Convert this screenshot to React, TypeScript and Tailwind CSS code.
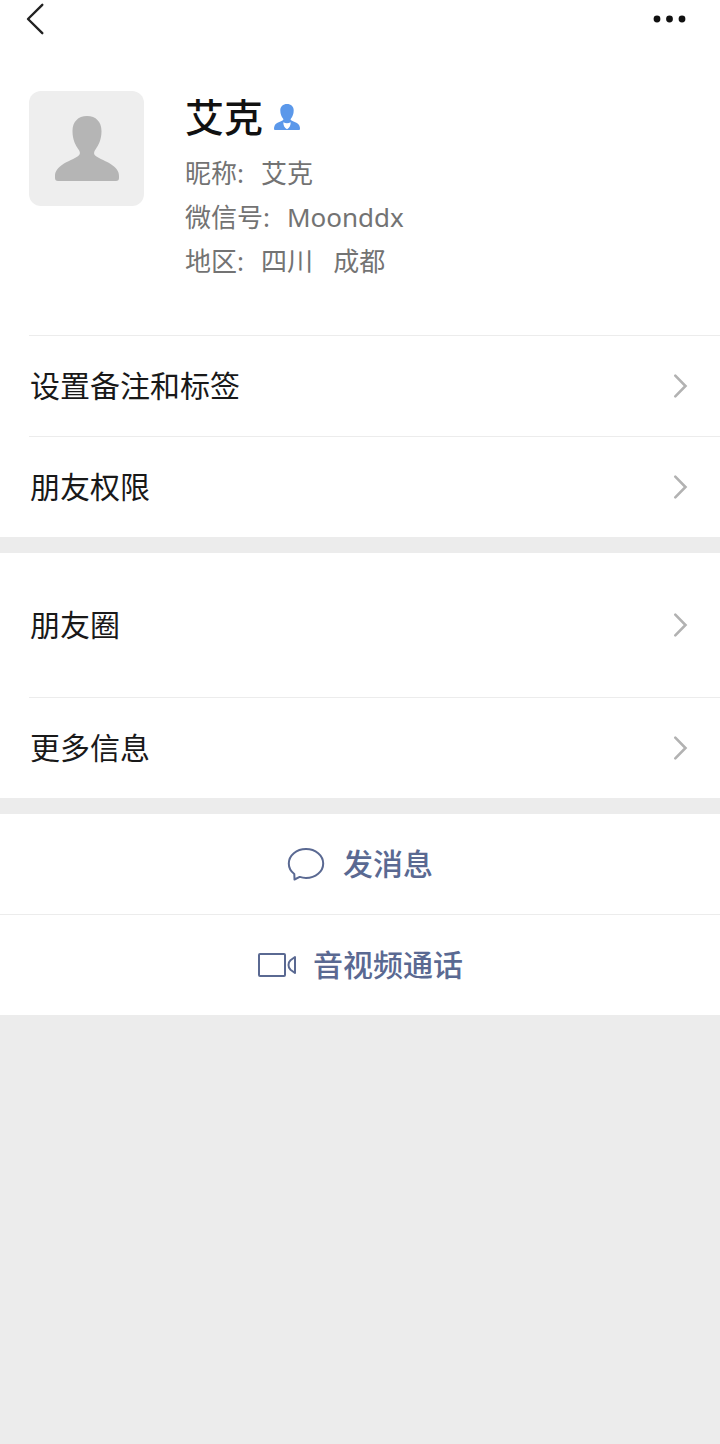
import React from 'react';

const PERSON_PATH =
  'M32 0C41 0 46.500 6 46.500 15C46.500 24 43.500 29 40.500 33.500C38.500 36.500 38.500 38.500 41.500 40.500C47 44 54 46 59 50.500C63 54 64 57 64 60V62Q64 65 61 65H3Q0 65 0 62V60C0 57 1 54 5 50.500C10 46 17 44 22.500 40.500C25.500 38.500 25.500 36.500 23.500 33.500C20.500 29 17.500 24 17.500 15C17.500 6 23 0 32 0Z';

const ChevronRight: React.FC = () => (
  <svg className="h-6 w-4 shrink-0 text-[#b2b2b2]" fill="none" viewBox="0 0 16 24" stroke="currentColor" strokeWidth={2.6} aria-hidden="true">
    <path strokeLinecap="round" d="M3.300 1.700L13.500 12L3.300 22.300" />
  </svg>
);

interface RowProps {
  label: string;
  tall?: boolean;
  divider?: boolean;
}

const Row: React.FC<RowProps> = ({ label, tall, divider }) => (
  <button
    type="button"
    className={`ml-[29px] flex items-center justify-between pr-8 pl-px text-left text-[30px] leading-10 text-[#191919] ${
      tall ? 'h-36' : 'h-[101px]'
    } ${divider ? 'border-t border-[#ececec]' : ''}`}
  >
    <span>{label}</span>
    <ChevronRight />
  </button>
);

const Detail: React.FC<{ term: string; value: string }> = ({ term, value }) => (
  <div className="flex gap-[17px]">
    <dt>{term}:</dt>
    <dd className="whitespace-pre">{value}</dd>
  </div>
);

const Profile: React.FC = () => (
  <div className="flex px-[29px] pt-[53px] pb-[52px]">
    <div className="flex h-[115px] w-[115px] shrink-0 items-center justify-center rounded-xl bg-[#eeeeee]">
      <svg className="h-[65px] w-16 text-[#b5b5b5]" viewBox="0 0 64 65" fill="currentColor" aria-hidden="true">
        <path d={PERSON_PATH} />
      </svg>
    </div>
    <div className="ml-[41px]">
      <div className="mb-2 flex items-center gap-[11px]">
        <h1 className="text-[39px] leading-[52px] font-medium text-[#111111]">艾克</h1>
        <svg className="h-[26px] w-[26px] text-[#5b98ea]" viewBox="0 0 26 26" fill="currentColor" aria-hidden="true">
          <path d="M13 0C17 0 19.700 2.600 19.700 6.500C19.700 10 18.500 12.500 17 14.500C16.300 15.500 16.500 16 17.500 16.500C20 17.800 24 18.800 25.300 21.500C25.900 22.800 26 24 26 25Q26 26 25 26H1Q0 26 0 25C0 24 .1 22.800 .7 21.500C2 18.800 6 17.800 8.500 16.500C9.500 16 9.700 15.500 9 14.500C7.500 12.500 6.300 10 6.300 6.500C6.300 2.600 9 0 13 0Z" />
          <path className="fill-white" d="M9.300 18.200Q13 20.500 16.700 18.200C16.700 21.500 15.500 23.800 13 25.300C10.500 23.800 9.300 21.500 9.300 18.200Z" />
        </svg>
      </div>
      <dl className="text-[26px] leading-[44px] text-[#737373]">
        <Detail term="昵称" value="艾克" />
        <Detail term="微信号" value="Moonddx" />
        <Detail term="地区" value="四川   成都" />
      </dl>
    </div>
  </div>
);

const App: React.FC = () => {
  return (
    <div className="min-h-screen bg-[#ececec] font-['Noto_Sans','Noto_Sans_CJK_SC',sans-serif]">
      <section className="flex flex-col bg-white">
        <header className="flex h-[38px] items-center justify-between pr-[33px] pl-[26px]">
          <button type="button" aria-label="返回">
            <svg className="h-8 w-[18px] text-[#222222]" fill="none" viewBox="0 0 18 32" stroke="currentColor" strokeWidth={2.4} aria-hidden="true">
              <path strokeLinecap="round" strokeLinejoin="round" d="M16.300 1.800L2 16L16.300 30.200" />
            </svg>
          </button>
          <button type="button" aria-label="更多">
            <svg className="h-2 w-[34px] text-[#111111]" viewBox="0 0 34 8" fill="currentColor" aria-hidden="true">
              <circle cx="4" cy="4" r="3.400" />
              <circle cx="16.500" cy="4" r="3.400" />
              <circle cx="29" cy="4" r="3.400" />
            </svg>
          </button>
        </header>
        <Profile />
        <Row label="设置备注和标签" divider />
        <Row label="朋友权限" divider />
      </section>

      <section className="mt-4 flex flex-col bg-white">
        <Row label="朋友圈" tall />
        <Row label="更多信息" divider />
      </section>

      <section className="mt-4 flex flex-col bg-white text-[30px] leading-10 font-medium text-[#5a6992]">
        <button type="button" className="flex h-[100px] items-center justify-center gap-[18px]">
          <svg className="h-9 w-[38px]" fill="none" viewBox="0 0 38 36" stroke="currentColor" strokeWidth={2} aria-hidden="true">
            <path strokeLinejoin="round" d="M7.500 33.500L7.300 28C3.800 25.400 1.800 21.600 1.800 17.500C1.800 9.300 9.500 3 19 3S36.200 9.300 36.200 17.500S28.500 32 19 32C16.800 32 14.700 31.600 12.700 30.900Z" />
          </svg>
          发消息
        </button>
        <button type="button" className="flex h-[101px] items-center justify-center gap-4 border-t border-[#ececec]">
          <svg className="h-[26px] w-10" fill="none" viewBox="0 0 40 26" stroke="currentColor" strokeWidth={2} aria-hidden="true">
            <rect x="2" y="2" width="26" height="22" rx="1" />
            <path strokeLinejoin="round" d="M38 5V21L33.500 17.800Q31.500 16 31.500 13T33.500 8.200Z" />
          </svg>
          音视频通话
        </button>
      </section>
    </div>
  );
};

export default App;
